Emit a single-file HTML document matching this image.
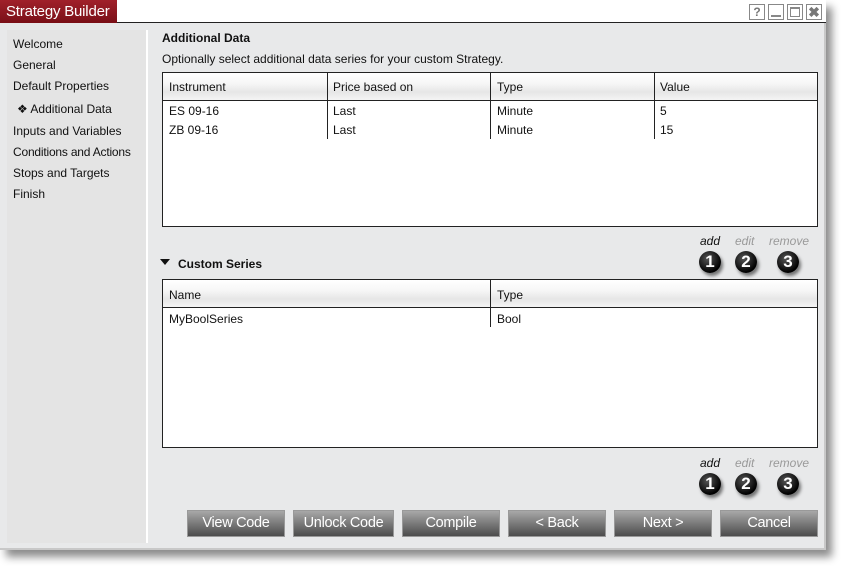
<!DOCTYPE html>
<html><head><meta charset="utf-8"><style>
*{margin:0;padding:0;box-sizing:border-box}
body{width:841px;height:566px;background:#fff;font-family:"Liberation Sans",Arial,sans-serif;font-size:12px;color:#111;position:relative;overflow:hidden}
.abs{position:absolute}
#win{left:0;top:0;width:826px;height:550px;background:#e8e9ea;box-shadow:6px 7px 8px rgba(0,0,0,.45);border-right:2px solid #c8c8c8;border-bottom:2px solid #c8c8c8}
#tbar{left:0;top:0;width:826px;height:23px;background:#fff;border-bottom:1px solid #222}
#title{left:0;top:0;width:117px;height:23px;background:linear-gradient(#a0202a,#7a1018);color:#fff;font-size:15px;line-height:23px;padding-left:6px;letter-spacing:-0.2px}
.wb{top:4px;width:16px;height:16px;border:1px solid #888;background:#fff;color:#777;font-size:12px;text-align:center;line-height:14px;font-weight:bold}
#side{left:7px;top:30px;width:141px;height:513px;background:#e4e4e4;border-right:2px solid #fff}
.nav{left:13px;font-size:12px;color:#111}
.tbl{left:162px;width:656px;background:#fff;border:1px solid #222}
.hdr{left:0;top:0;height:28px;width:100%;background:linear-gradient(#fff 0%,#f6f6f6 40%,#e6e6e6 70%,#f4f4f4 100%);border-bottom:1px solid #222}
.c{font-size:12px}
.vl{width:1px;background:#222}
.btn{top:510px;height:27px;background:linear-gradient(#a8a8a8,#4c4c4c);border:1px solid #999;color:#fff;font-size:14.5px;text-align:center;line-height:25px;letter-spacing:-0.3px}
.lbl{font-style:italic;font-size:12px}
.num{width:22px;height:22px;border-radius:50%;background:radial-gradient(circle at 40% 35%,#555,#000 70%);color:#fff;font-weight:bold;font-size:17px;text-align:center;line-height:22px;box-shadow:2px 3px 3px rgba(0,0,0,.5)}
</style></head><body>
<div id="win" class="abs"></div>
<div id="tbar" class="abs"></div>
<div id="title" class="abs">Strategy Builder</div>
<div class="abs wb" style="left:749px">?</div>
<div class="abs wb" style="left:768px"><div style="position:absolute;left:2px;top:10px;width:10px;height:2px;background:#888"></div></div>
<div class="abs wb" style="left:787px"><div style="position:absolute;left:2px;top:2px;width:10px;height:10px;border:1px solid #888;border-top-width:2px"></div></div>
<div class="abs wb" style="left:806px;font-size:14px;line-height:14px">✖</div>
<div id="side" class="abs"></div>
<div class="abs nav" style="top:37px">Welcome</div>
<div class="abs nav" style="top:58px">General</div>
<div class="abs nav" style="top:79px">Default Properties</div>
<div class="abs nav" style="top:102px;left:17px">❖ Additional Data</div>
<div class="abs nav" style="top:124px">Inputs and Variables</div>
<div class="abs nav" style="top:145px;letter-spacing:-0.2px">Conditions and Actions</div>
<div class="abs nav" style="top:166px">Stops and Targets</div>
<div class="abs nav" style="top:187px">Finish</div>

<div class="abs" style="left:162px;top:31px;font-weight:bold;font-size:12px">Additional Data</div>
<div class="abs" style="left:162px;top:52px;font-size:12px">Optionally select additional data series for your custom Strategy.</div>

<div class="abs tbl" style="top:72px;height:155px">
 <div class="abs hdr"></div>
 <div class="abs vl" style="left:164px;top:0;height:66px"></div>
 <div class="abs vl" style="left:327px;top:0;height:66px"></div>
 <div class="abs vl" style="left:491px;top:0;height:66px"></div>
 <div class="abs c" style="left:6px;top:7px">Instrument</div>
 <div class="abs c" style="left:170px;top:7px">Price based on</div>
 <div class="abs c" style="left:334px;top:7px">Type</div>
 <div class="abs c" style="left:497px;top:7px">Value</div>
 <div class="abs c" style="left:6px;top:31px">ES 09-16</div>
 <div class="abs c" style="left:170px;top:31px">Last</div>
 <div class="abs c" style="left:334px;top:31px">Minute</div>
 <div class="abs c" style="left:497px;top:31px">5</div>
 <div class="abs c" style="left:6px;top:50px">ZB 09-16</div>
 <div class="abs c" style="left:170px;top:50px">Last</div>
 <div class="abs c" style="left:334px;top:50px">Minute</div>
 <div class="abs c" style="left:497px;top:50px">15</div>
</div>

<div class="abs lbl" style="left:700px;top:234px;color:#111">add</div>
<div class="abs lbl" style="left:735px;top:234px;color:#999">edit</div>
<div class="abs lbl" style="left:769px;top:234px;color:#999">remove</div>
<div class="abs num" style="left:699px;top:251px">1</div>
<div class="abs num" style="left:735px;top:251px">2</div>
<div class="abs num" style="left:777px;top:251px">3</div>

<div class="abs" style="left:160px;top:259px;width:0;height:0;border-left:5px solid transparent;border-right:5px solid transparent;border-top:6px solid #111"></div>
<div class="abs" style="left:178px;top:257px;font-weight:bold;font-size:12px">Custom Series</div>

<div class="abs tbl" style="top:279px;height:169px">
 <div class="abs hdr"></div>
 <div class="abs vl" style="left:327px;top:0;height:47px"></div>
 <div class="abs c" style="left:6px;top:8px">Name</div>
 <div class="abs c" style="left:334px;top:8px">Type</div>
 <div class="abs c" style="left:6px;top:32px">MyBoolSeries</div>
 <div class="abs c" style="left:334px;top:32px">Bool</div>
</div>

<div class="abs lbl" style="left:700px;top:456px;color:#111">add</div>
<div class="abs lbl" style="left:735px;top:456px;color:#999">edit</div>
<div class="abs lbl" style="left:769px;top:456px;color:#999">remove</div>
<div class="abs num" style="left:699px;top:473px">1</div>
<div class="abs num" style="left:735px;top:473px">2</div>
<div class="abs num" style="left:777px;top:473px">3</div>

<div class="abs btn" style="left:187px;width:98px">View Code</div>
<div class="abs btn" style="left:293px;width:101px">Unlock Code</div>
<div class="abs btn" style="left:402px;width:98px">Compile</div>
<div class="abs btn" style="left:508px;width:98px">&lt; Back</div>
<div class="abs btn" style="left:614px;width:98px">Next &gt;</div>
<div class="abs btn" style="left:720px;width:98px">Cancel</div>
</body></html>
